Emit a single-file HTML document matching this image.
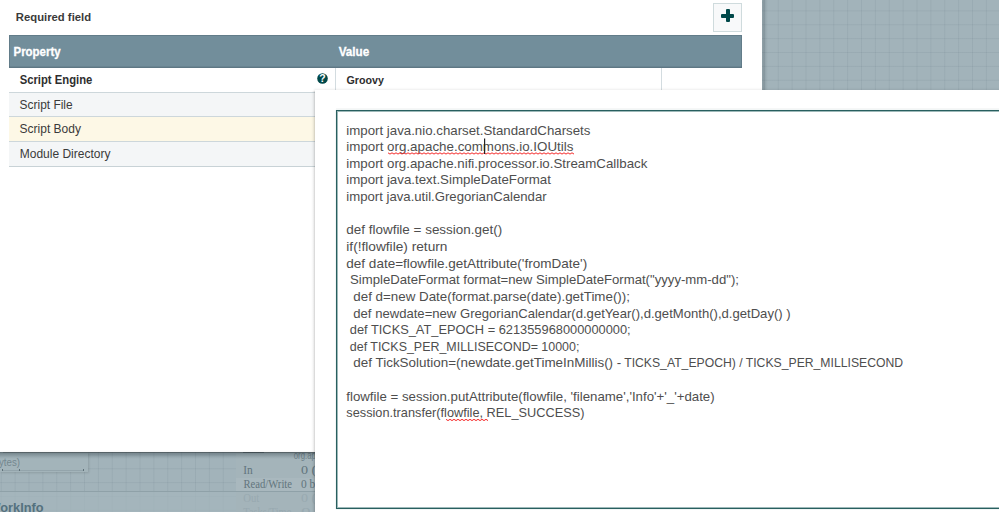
<!DOCTYPE html>
<html><head><meta charset="utf-8"><style>
html,body{margin:0;padding:0;}
body{width:999px;height:512px;overflow:hidden;position:relative;font-family:'Liberation Sans', sans-serif;}
.abs{position:absolute;}
svg.txt{position:absolute;left:0;top:0;width:999px;height:512px;overflow:visible;}
</style></head><body>
<div class="abs" style="left:0;top:0;width:999px;height:512px;background-color:#a2b3ba;background-image:linear-gradient(to right, rgba(110,130,140,.16) 1px, transparent 1px),linear-gradient(to bottom, rgba(110,130,140,.16) 1px, transparent 1px);background-size:13.875px 13.875px;background-position:0.75px 10.4px;"></div>

<!-- bottom-left canvas components -->
<div class="abs" style="left:0;top:452px;width:88px;height:20px;background:#a3b4ba;box-shadow:1px 1px 2px rgba(0,0,0,.12)"></div>
<div class="abs" style="left:2px;top:469.5px;width:82px;height:1px;background:#93a4ab"></div><div class="abs" style="left:1.5px;top:468.5px;width:1.2px;height:2.5px;background:#5d6f77"></div><div class="abs" style="left:18.5px;top:468.5px;width:1.2px;height:2.5px;background:#5d6f77"></div><div class="abs" style="left:83px;top:468.5px;width:1.2px;height:2.5px;background:#5d6f77"></div>
<div class="abs" style="left:235.5px;top:452px;width:90px;height:60px;background:#a4b4ba"></div>
<div class="abs" style="left:235.5px;top:477.5px;width:90px;height:14px;background:#a9b8be"></div>
<div class="abs" style="left:0;top:491px;width:320px;height:1px;background:#8fa1a8"></div>
<div class="abs" style="left:0;top:492px;width:235.5px;height:20px;background:rgba(164,181,188,.75)"></div>
<svg class="txt">
 <text x="-1" y="466" textLength="21" lengthAdjust="spacingAndGlyphs" font-family="'Liberation Sans', sans-serif" font-size="11" font-weight="normal" fill="#74878f" >ytes)</text>
 <rect x="243" y="451.3" width="21" height="1.6" fill="#5b6c74" opacity=".7"/>
 <text x="293.8" y="459" textLength="22" lengthAdjust="spacingAndGlyphs" font-family="'Liberation Sans', sans-serif" font-size="10" font-weight="normal" fill="#6e8189" >org.ap</text>
 <text x="243.3" y="473.8" textLength="9.5" lengthAdjust="spacingAndGlyphs" font-family="'Liberation Serif', serif" font-size="11.5" font-weight="normal" fill="#62757d" >In</text>
 <text x="301" y="473.8" textLength="20" lengthAdjust="spacingAndGlyphs" font-family="'Liberation Serif', serif" font-size="11.5" font-weight="normal" fill="#62757d" >0 ((</text>
 <text x="243.5" y="488" textLength="48.5" lengthAdjust="spacingAndGlyphs" font-family="'Liberation Serif', serif" font-size="11.5" font-weight="normal" fill="#62757d" >Read/Write</text>
 <text x="301" y="488" textLength="20" lengthAdjust="spacingAndGlyphs" font-family="'Liberation Serif', serif" font-size="11.5" font-weight="normal" fill="#62757d" >0 by</text>
 <text x="243.3" y="502" textLength="16" lengthAdjust="spacingAndGlyphs" font-family="'Liberation Serif', serif" font-size="11.5" font-weight="normal" fill="#98a9b0" >Out</text>
 <text x="301" y="502" textLength="20" lengthAdjust="spacingAndGlyphs" font-family="'Liberation Serif', serif" font-size="11.5" font-weight="normal" fill="#98a9b0" >0 ((</text>
 <text x="243.3" y="516" textLength="48" lengthAdjust="spacingAndGlyphs" font-family="'Liberation Serif', serif" font-size="11.5" font-weight="normal" fill="#98a9b0" >Tasks/Time</text>
 <text x="301" y="516" textLength="20" lengthAdjust="spacingAndGlyphs" font-family="'Liberation Serif', serif" font-size="11.5" font-weight="normal" fill="#98a9b0" >0 /</text>
 <text x="-11.5" y="512" textLength="55" lengthAdjust="spacingAndGlyphs" font-family="'Liberation Sans', sans-serif" font-size="13" font-weight="bold" fill="#54717e" >WorkInfo</text>
</svg>

<!-- white dialog panel -->
<div class="abs" style="left:0;top:452px;width:762px;height:7px;background:linear-gradient(to bottom, rgba(40,55,62,.42), rgba(40,55,62,.26) 35%, rgba(40,55,62,.08) 75%, rgba(40,55,62,0))"></div>
<div class="abs" style="left:0;top:0;width:762px;height:452px;background:#fff;box-shadow:0 0.5px 1px rgba(0,0,0,.25)"></div>
<div class="abs" style="left:0;top:449.5px;width:762px;height:2px;background:linear-gradient(to bottom, rgba(0,0,0,0), rgba(0,0,0,.03))"></div>

<!-- plus button -->
<div class="abs" style="left:713px;top:3px;width:27px;height:27px;border:1px solid #cfdbdd;background:#f8f9fa"></div>
<div class="abs" style="left:721px;top:14.2px;width:13.2px;height:3.8px;background:#004849;border-radius:1px"></div>
<div class="abs" style="left:725.8px;top:9.3px;width:3.8px;height:13px;background:#004849;border-radius:1px"></div>

<!-- table header -->
<div class="abs" style="left:9px;top:35px;width:733px;height:32.5px;background:#728e9b;box-shadow:inset 0 0 0 1px rgba(85,110,122,.55), inset 0 -2px 0 rgba(85,110,122,.3)"></div>
<!-- rows -->
<div class="abs" style="left:9px;top:67.5px;width:733px;height:24px;background:#fff"></div>
<div class="abs" style="left:9px;top:92px;width:733px;height:24px;background:#f4f6f7;border-top:1px solid #cdd7db"></div>
<div class="abs" style="left:9px;top:116px;width:733px;height:24px;background:#fdf8e6;border-top:1px solid #cdd7db"></div>
<div class="abs" style="left:9px;top:141px;width:733px;height:24px;background:#f4f6f7;border-top:1px solid #cdd7db;border-bottom:1px solid #c8d2d6"></div>
<div class="abs" style="left:335px;top:67.5px;width:1px;height:24px;background:#d3dce0"></div>
<div class="abs" style="left:660.5px;top:67.5px;width:1px;height:24px;background:#d3dce0"></div>
<!-- help icon -->
<svg class="abs" style="left:317px;top:72.7px" width="11" height="11" viewBox="0 0 11 11">
 <circle cx="5.5" cy="5.5" r="5.3" fill="#004849"/>
 <text x="5.5" y="9.3" text-anchor="middle" font-family="'Liberation Sans'" font-weight="bold" font-size="10.5" fill="#fff">?</text>
</svg>
<svg class="txt">
 <text x="15.8" y="21" textLength="75.3" lengthAdjust="spacingAndGlyphs" font-family="'Liberation Sans', sans-serif" font-size="11.5" font-weight="bold" fill="#3a3a3a" >Required field</text><text x="13.5" y="55.8" textLength="47.1" lengthAdjust="spacingAndGlyphs" font-family="'Liberation Sans', sans-serif" font-size="12" font-weight="bold" fill="#ffffff"  stroke="#fff" stroke-width="0.3">Property</text><text x="338.7" y="55.7" textLength="30.6" lengthAdjust="spacingAndGlyphs" font-family="'Liberation Sans', sans-serif" font-size="12" font-weight="bold" fill="#ffffff"  stroke="#fff" stroke-width="0.3">Value</text><text x="19.7" y="84" textLength="72.6" lengthAdjust="spacingAndGlyphs" font-family="'Liberation Sans', sans-serif" font-size="12" font-weight="bold" fill="#2e2e2e" >Script Engine</text><text x="19.6" y="108.5" textLength="53.0" lengthAdjust="spacingAndGlyphs" font-family="'Liberation Sans', sans-serif" font-size="12" font-weight="normal" fill="#3a3a3a" >Script File</text><text x="19.6" y="133.3" textLength="61.3" lengthAdjust="spacingAndGlyphs" font-family="'Liberation Sans', sans-serif" font-size="12" font-weight="normal" fill="#3a3a3a" >Script Body</text><text x="19.7" y="157.5" textLength="90.8" lengthAdjust="spacingAndGlyphs" font-family="'Liberation Sans', sans-serif" font-size="12" font-weight="normal" fill="#3a3a3a" >Module Directory</text><text x="346.5" y="84" textLength="37.4" lengthAdjust="spacingAndGlyphs" font-family="'Liberation Sans', sans-serif" font-size="11.5" font-weight="bold" fill="#2e2e2e" >Groovy</text>
</svg>

<!-- canvas left-edge shadow -->
<div class="abs" style="left:762px;top:0;width:6px;height:90px;background:linear-gradient(to right, rgba(40,55,62,.10), rgba(40,55,62,.22) 30%, rgba(40,55,62,.08) 65%, rgba(40,55,62,0))"></div>

<!-- popup editor -->
<div class="abs" style="left:311px;top:91px;width:4px;height:421px;background:linear-gradient(to right, rgba(0,0,0,0), rgba(0,0,0,.035) 55%, rgba(0,0,0,.12))"></div>
<div class="abs" style="left:315px;top:90px;width:700px;height:440px;background:#fff;box-shadow:-1px -1px 2px rgba(0,0,0,.07)"></div>
<div class="abs" style="left:336px;top:108px;width:680px;height:1px;background:#f6f7f7"></div>
<div class="abs" style="left:336px;top:110px;width:700px;height:396.7px;border:1px solid #285f5f;background:#fff;box-shadow:inset 0 0 0 1px rgba(40,100,100,.45), 0 0 1px rgba(40,100,100,.35)"></div>

<svg class="txt">
 <text x="346.3" y="134.5" textLength="244.1" lengthAdjust="spacingAndGlyphs" font-family="'Liberation Sans', sans-serif" font-size="13" font-weight="normal" fill="#4e4e4e" >import java.nio.charset.StandardCharsets</text><text x="346.3" y="151.14" textLength="227.1" lengthAdjust="spacingAndGlyphs" font-family="'Liberation Sans', sans-serif" font-size="13" font-weight="normal" fill="#4e4e4e" >import org.apache.commons.io.IOUtils</text><text x="346.3" y="167.78" textLength="301.1" lengthAdjust="spacingAndGlyphs" font-family="'Liberation Sans', sans-serif" font-size="13" font-weight="normal" fill="#4e4e4e" >import org.apache.nifi.processor.io.StreamCallback</text><text x="346.3" y="184.42" textLength="204.6" lengthAdjust="spacingAndGlyphs" font-family="'Liberation Sans', sans-serif" font-size="13" font-weight="normal" fill="#4e4e4e" >import java.text.SimpleDateFormat</text><text x="346.3" y="201.06" textLength="200.32" lengthAdjust="spacingAndGlyphs" font-family="'Liberation Sans', sans-serif" font-size="13" font-weight="normal" fill="#4e4e4e" >import java.util.GregorianCalendar</text><text x="346.3" y="234.34" textLength="155.86" lengthAdjust="spacingAndGlyphs" font-family="'Liberation Sans', sans-serif" font-size="13" font-weight="normal" fill="#4e4e4e" >def flowfile = session.get()</text><text x="346.3" y="250.98" textLength="101.1" lengthAdjust="spacingAndGlyphs" font-family="'Liberation Sans', sans-serif" font-size="13" font-weight="normal" fill="#4e4e4e" >if(!flowfile) return</text><text x="346.3" y="267.62" textLength="240.86" lengthAdjust="spacingAndGlyphs" font-family="'Liberation Sans', sans-serif" font-size="13" font-weight="normal" fill="#4e4e4e" >def date=flowfile.getAttribute(&#x27;fromDate&#x27;)</text><text x="350.06" y="284.26" textLength="388.9" lengthAdjust="spacingAndGlyphs" font-family="'Liberation Sans', sans-serif" font-size="13" font-weight="normal" fill="#4e4e4e" >SimpleDateFormat format=new SimpleDateFormat(&quot;yyyy-mm-dd&quot;);</text><text x="353.3" y="300.9" textLength="276.66" lengthAdjust="spacingAndGlyphs" font-family="'Liberation Sans', sans-serif" font-size="13" font-weight="normal" fill="#4e4e4e" >def d=new Date(format.parse(date).getTime());</text><text x="353.3" y="317.54" textLength="437.38" lengthAdjust="spacingAndGlyphs" font-family="'Liberation Sans', sans-serif" font-size="13" font-weight="normal" fill="#4e4e4e" >def newdate=new GregorianCalendar(d.getYear(),d.getMonth(),d.getDay() )</text><text x="349.8" y="334.18" textLength="280.88" lengthAdjust="spacingAndGlyphs" font-family="'Liberation Sans', sans-serif" font-size="13" font-weight="normal" fill="#4e4e4e" >def TICKS_AT_EPOCH = 621355968000000000;</text><text x="349.8" y="350.82" textLength="229.62" lengthAdjust="spacingAndGlyphs" font-family="'Liberation Sans', sans-serif" font-size="13" font-weight="normal" fill="#4e4e4e" >def TICKS_PER_MILLISECOND= 10000;</text><text x="624.2" y="367.46" textLength="278.9" lengthAdjust="spacingAndGlyphs" font-family="'Liberation Sans', sans-serif" font-size="13" font-weight="normal" fill="#4e4e4e" >TICKS_AT_EPOCH) / TICKS_PER_MILLISECOND</text><text x="353.3" y="367.46" textLength="268.0" lengthAdjust="spacingAndGlyphs" font-family="'Liberation Sans', sans-serif" font-size="13" font-weight="normal" fill="#4e4e4e" >def TickSolution=(newdate.getTimeInMillis() -</text><text x="346.3" y="400.74" textLength="368.36" lengthAdjust="spacingAndGlyphs" font-family="'Liberation Sans', sans-serif" font-size="13" font-weight="normal" fill="#4e4e4e" >flowfile = session.putAttribute(flowfile, &#x27;filename&#x27;,&#x27;Info&#x27;+&#x27;_&#x27;+date)</text><text x="346.3" y="417.38" textLength="238.1" lengthAdjust="spacingAndGlyphs" font-family="'Liberation Sans', sans-serif" font-size="13" font-weight="normal" fill="#4e4e4e" >session.transfer(flowfile, REL_SUCCESS)</text>
 <path d="M388 152.8 l2 1.3 l2 -1.3 l2 1.3 l2 -1.3 l2 1.3 l2 -1.3 l2 1.3 l2 -1.3 l2 1.3 l2 -1.3 l2 1.3 l2 -1.3 l2 1.3 l2 -1.3 l2 1.3 l2 -1.3 l2 1.3 l2 -1.3 l2 1.3 l2 -1.3 l2 1.3 l2 -1.3 l2 1.3 l2 -1.3 l2 1.3 l2 -1.3 l2 1.3 l2 -1.3 l2 1.3 l2 -1.3 l2 1.3 l2 -1.3 l2 1.3 l2 -1.3 l2 1.3 l2 -1.3 l2 1.3 l2 -1.3 l2 1.3 l2 -1.3 l2 1.3 l2 -1.3 l2 1.3 l2 -1.3 l2 1.3 l2 -1.3 l2 1.3 l2 -1.3 l2 1.3 l2 -1.3 l2 1.3 l2 -1.3 l2 1.3 l2 -1.3 l2 1.3 l2 -1.3 l2 1.3 l2 -1.3 l2 1.3 l2 -1.3 l2 1.3 l2 -1.3 l2 1.3 l2 -1.3 l2 1.3 l2 -1.3 l2 1.3 l2 -1.3 l2 1.3 l2 -1.3 l2 1.3 l2 -1.3 l2 1.3 l2 -1.3 l2 1.3 l2 -1.3 l2 1.3 l2 -1.3 l2 1.3 l2 -1.3 l2 1.3 l2 -1.3 l2 1.3 l2 -1.3 l2 1.3 l2 -1.3 l2 1.3 l2 -1.3 l2 1.3 l2 -1.3 l2 1.3 l2 -1.3 l2 1.3" stroke="#f52a2a" stroke-width="1" fill="none"/>
 <path d="M446 419.3 l2 1.3 l2 -1.3 l2 1.3 l2 -1.3 l2 1.3 l2 -1.3 l2 1.3 l2 -1.3 l2 1.3 l2 -1.3 l2 1.3 l2 -1.3 l2 1.3 l2 -1.3 l2 1.3 l2 -1.3 l2 1.3 l2 -1.3 l2 1.3 l2 -1.3 l2 1.3" stroke="#f52a2a" stroke-width="1" fill="none"/>
 <rect x="484" y="138.5" width="1.2" height="15.5" fill="#222"/>
</svg>
</body></html>
